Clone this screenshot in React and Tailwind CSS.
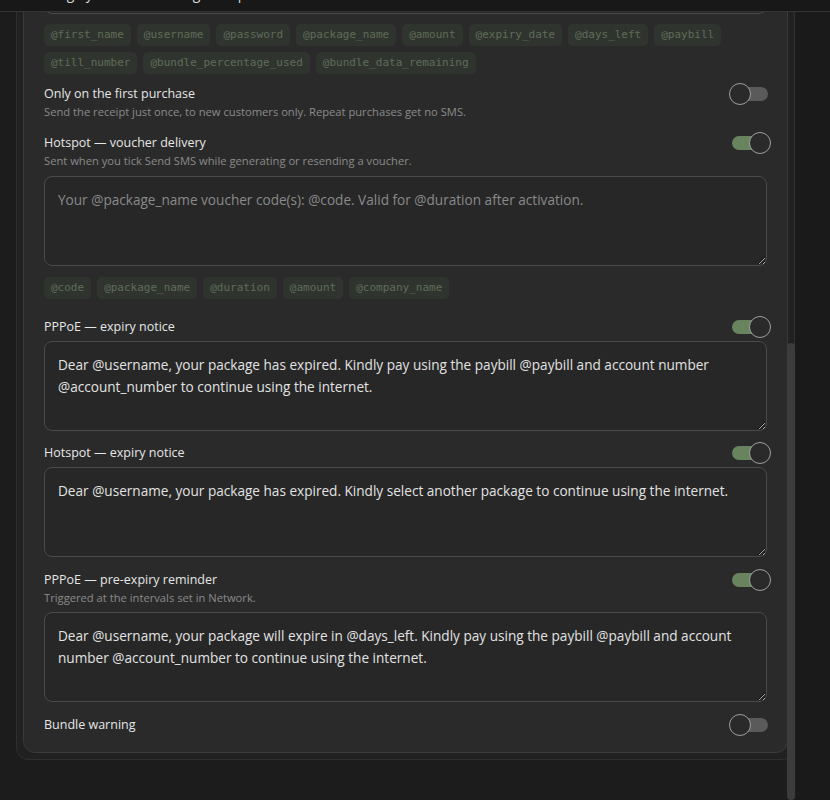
import React from 'react';

const SANS = { fontFamily: '"Open Sans", "Noto Sans", sans-serif' };
const MONO = { fontFamily: '"DejaVu Sans Mono", "Liberation Mono", monospace' };

const receiptTags = ['@first_name', '@username', '@password', '@package_name', '@amount', '@expiry_date', '@days_left', '@paybill', '@till_number', '@bundle_percentage_used', '@bundle_data_remaining'];
const voucherTags = ['@code', '@package_name', '@duration', '@amount', '@company_name'];

function Toggle({ on }) {
  return (
    <div className="relative w-[42px] h-[22px] shrink-0 -my-[3px] -mr-1">
      <div className={`absolute left-[3px] right-[3px] top-[4px] h-[14px] rounded-full ${on ? 'bg-[#68845f]' : 'bg-[#5a5a5a]'}`} />
      <div className={`absolute top-0 w-[22px] h-[22px] rounded-full border-[1.5px] border-[#9f9f9f] bg-[#2a2a2a] ${on ? 'right-0' : 'left-0'}`} />
    </div>
  );
}

function SettingHeader({ title, desc, on }) {
  return (
    <div className="flex items-start justify-between">
      <div>
        <p className="text-[12.5px] leading-4 font-medium text-[#e6e6e6]">{title}</p>
        {desc && <p className="mt-[2px] text-[11.2px] leading-4 text-[#8a8a8a]">{desc}</p>}
      </div>
      <Toggle on={on} />
    </div>
  );
}

function Template({ value, placeholder, className = '' }) {
  return (
    <textarea
      readOnly
      defaultValue={value}
      placeholder={placeholder}
      className={`block w-full h-[90px] resize-y rounded-lg border border-[#4a4a4a] bg-[#272727] px-[13px] py-3 text-[13.6px] leading-[22px] text-[#e2e2e2] placeholder:text-[#8a8a8a] outline-none [color-scheme:dark] ${className}`}
      style={SANS}
    />
  );
}

function Tags({ items, className = '' }) {
  return (
    <div className={`flex flex-wrap gap-x-[6px] gap-y-[6px] ${className}`}>
      {items.map((t) => (
        <span key={t} className="h-[22px] px-[7px] rounded-[5px] bg-[#2f352e] text-[11px] leading-[22px] text-[#5f6c59]" style={MONO}>
          {t}
        </span>
      ))}
    </div>
  );
}

export default function App() {
  return (
    <div className="h-[800px] overflow-hidden bg-[#1c1c1c] flex flex-col" style={SANS}>
      <header className="h-[12px] shrink-0 overflow-hidden border-b border-[#343434] bg-[#181818] pl-[30px]">
        <p className="-mt-[16px] text-[14px] leading-5 text-[#d8d8d8]">Manage your SMS message templates</p>
      </header>

      <div className="flex flex-1 min-h-0">
        <div className="relative w-[796px] shrink-0 overflow-hidden">
          <div className="ml-4 w-[779px] -mt-[156px] rounded-xl border border-[#2f2f2f] bg-[#212121] p-[6px]">
            <div className="rounded-xl border border-[#3a3a3a] bg-[#2a2a2a] px-5 pt-5 pb-[19px]">
              <SettingHeader title="Hotspot — purchase receipt" desc="Sent after a customer pays for a hotspot package." on />
              <Template className="mt-1.5" value="Hi @first_name, your @package_name is active. Username: @username Password: @password. Expires @expiry_date." />
              <Tags items={receiptTags} className="mt-[10px]" />

              <div className="mt-3">
                <SettingHeader title="Only on the first purchase" desc="Send the receipt just once, to new customers only. Repeat purchases get no SMS." on={false} />
              </div>

              <div className="mt-[15px]">
                <SettingHeader title="Hotspot — voucher delivery" desc="Sent when you tick Send SMS while generating or resending a voucher." on />
                <Template className="mt-[7px]" placeholder="Your @package_name voucher code(s): @code. Valid for @duration after activation." />
                <Tags items={voucherTags} className="mt-[11px]" />
              </div>

              <div className="mt-5">
                <SettingHeader title="PPPoE — expiry notice" on />
                <Template className="mt-1.5" value="Dear @username, your package has expired. Kindly pay using the paybill @paybill and account number @account_number to continue using the internet." />
              </div>

              <div className="mt-[14px]">
                <SettingHeader title="Hotspot — expiry notice" on />
                <Template className="mt-1.5" value="Dear @username, your package has expired. Kindly select another package to continue using the internet." />
              </div>

              <div className="mt-[15px]">
                <SettingHeader title="PPPoE — pre-expiry reminder" desc="Triggered at the intervals set in Network." on />
                <Template className="mt-1.5" value="Dear @username, your package will expire in @days_left. Kindly pay using the paybill @paybill and account number @account_number to continue using the internet." />
              </div>

              <div className="mt-[15px]">
                <SettingHeader title="Bundle warning" on={false} />
              </div>
            </div>
          </div>

          {/* scrollbar thumb sitting over the panel edge */}
          <div className="absolute right-[1px] top-[331px] bottom-0 w-2 rounded-full bg-[#3c3c3c]" />
        </div>
        <div className="flex-1 bg-[#1a1a1a]" />
      </div>
    </div>
  );
}
